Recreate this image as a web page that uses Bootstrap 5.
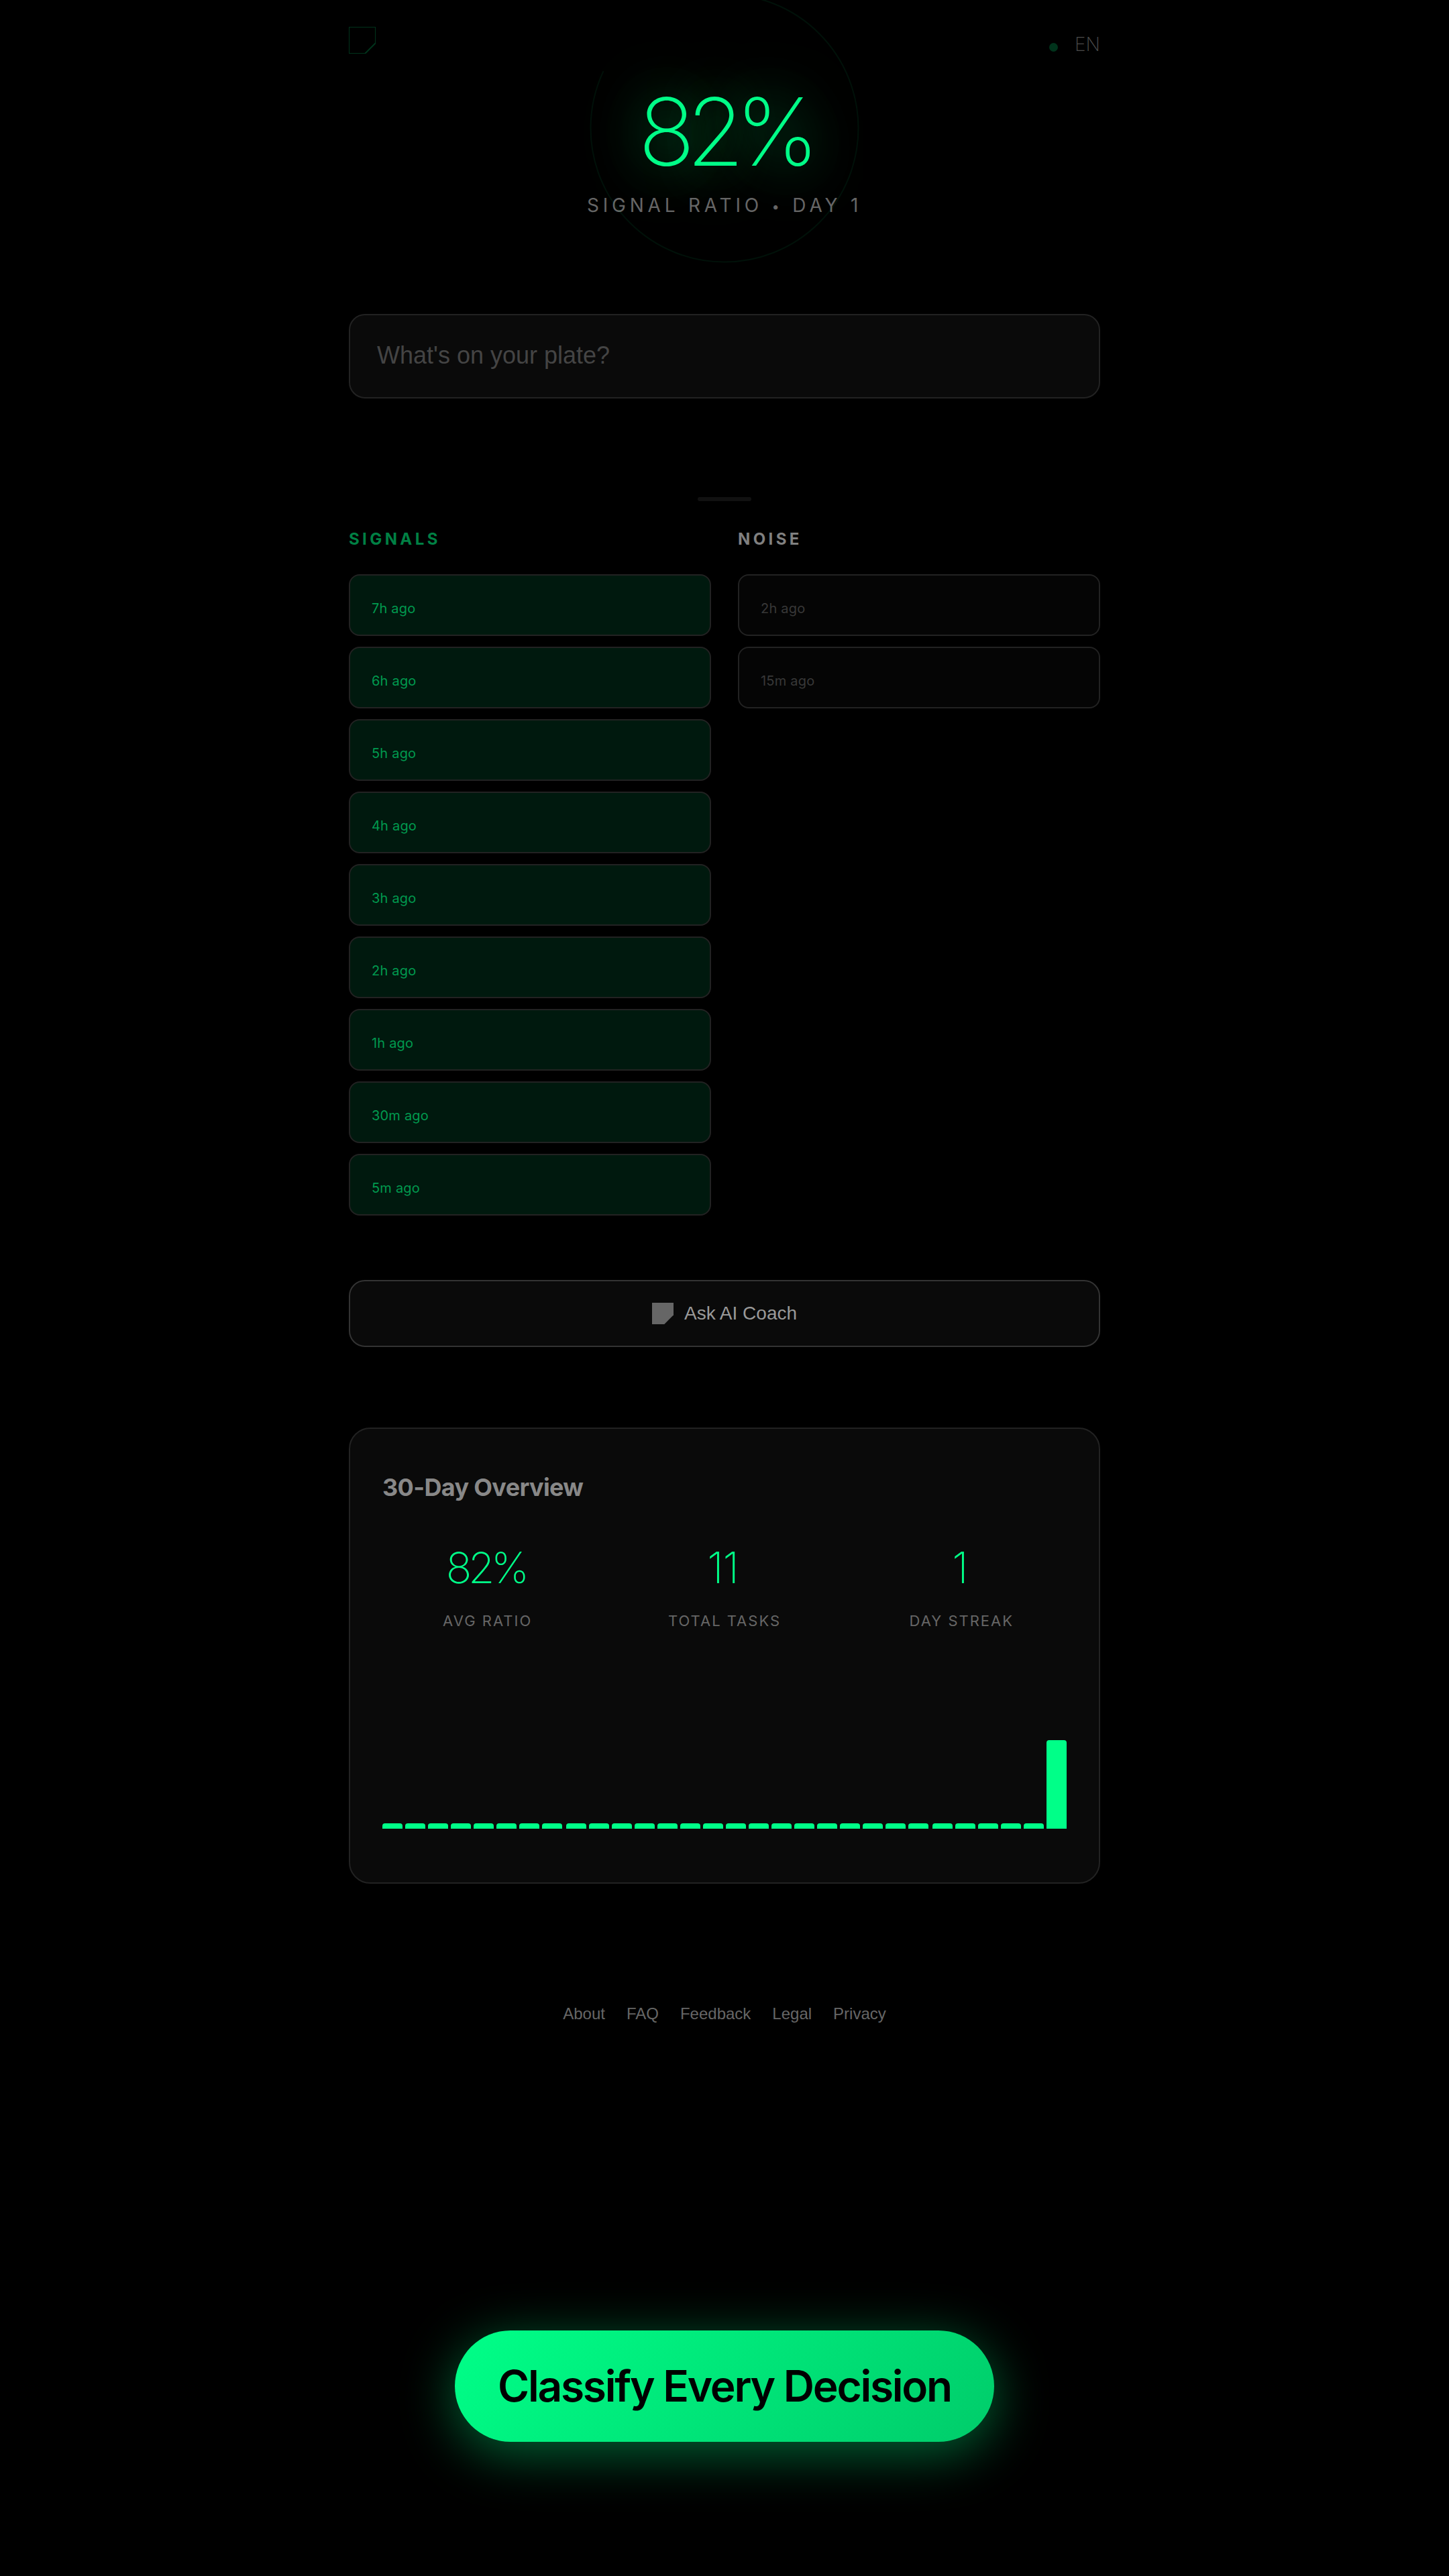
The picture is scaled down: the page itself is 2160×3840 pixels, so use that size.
<!DOCTYPE html>
<html lang="en">
<head>
<meta charset="utf-8">
<meta name="viewport" content="width=device-width, initial-scale=1">
<title>Signal / Noise</title>
<link href="https://cdn.jsdelivr.net/npm/bootstrap@5.3.0/dist/css/bootstrap.min.css" rel="stylesheet">
<style>
  :root { --signal: #00ff88; }
  body { background: #000; color: #fff; font-family: Inter, sans-serif; min-height: 3840px; }
  .shell { width: 1120px; }
  .brandbar { height: 134px; padding-top: 40px; }
  .brandmark { width: 40px; height: 40px; opacity: .2; }
  .lang-tools { height: 52px; gap: 25px; }
  .live-dot { width: 13px; height: 13px; border-radius: 50%; background: #00331b; margin-top: 8px; }
  .lang-code { font-size: 28px; font-weight: 200; line-height: 52px; letter-spacing: 0; color: #4c4c4c; }
  .hero { height: 334px; }
  .ring { position: absolute; left: 50%; top: -145px; width: 404px; height: 404px; margin-left: -202px; }
  .hero-ratio { font-size: 140px; font-weight: 230; line-height: 124px; letter-spacing: -13px; color: var(--signal); text-shadow: 0 0 80px rgba(0,255,136,.6), 0 0 120px rgba(0,255,136,.25); }
  .hero-label { font-size: 28px; line-height: 34px; letter-spacing: 5.8px; color: #666; margin-top: 31px; }
  .hero-label span { display: inline-block; font-size: 20px; line-height: 1; vertical-align: 1px; }
  .task-input, .task-input:focus { height: 126px; padding: 0 40px 2px; border: 2px solid #222; border-radius: 24px; background: #0a0a0a; color: #fff; font: 36px "Liberation Sans", sans-serif; }
  .task-input::placeholder { color: #444; opacity: 1; }
  .grip { width: 80px; height: 6px; border-radius: 4px; background: #111; margin-top: 147px; }
  .lists { margin-top: 42px; gap: 40px; }
  .list-title { font-size: 24px; font-weight: 700; line-height: 30px; letter-spacing: 4.4px; margin: 0 0 37px; }
  .list-signal .list-title { color: #008044; }
  .list-noise .list-title { color: #808080; }
  .entry { height: 92px; padding: 9px 32px 0; border: 2px solid #222; border-radius: 16px; font-size: 20px; letter-spacing: .2px; display: flex; align-items: center; }
  .list-signal .entry { background: #00190e; color: #00994f; }
  .list-noise .entry { background: #050505; color: #383838; }
  .coach, .coach:hover { height: 100px; margin-top: 96px; border: 2px solid #333; border-radius: 24px; background: #0a0a0a; color: #999; font: 28px "Liberation Sans", sans-serif; }
  .overview { height: 680px; margin-top: 120px; padding: 0 48px; border: 2px solid #222; border-radius: 32px; background: #0a0a0a; color: #888; }
  .overview-title { font-size: 36px; font-weight: 700; line-height: 44px; letter-spacing: -.65px; margin: 65px 0 60px; }
  .stats { gap: 40px; }
  .stat-value { font-size: 64px; font-weight: 230; line-height: 76px; letter-spacing: -1.2px; padding-right: 5px; color: var(--signal); }
  .stat-value.tight { letter-spacing: -5.4px; padding-right: 5px; }
  .stat-name { font-size: 22px; line-height: 28px; letter-spacing: 2px; color: #666; margin-top: 27px; }
  .chart { height: 160px; gap: 4px; margin-top: 136px; }
  .chart-bar { width: 30px; flex: none; border-radius: 4px 4px 0 0; background: var(--signal); }
  .chart-bar.wide-gap { margin-left: 2px; }
  .foot { margin-top: 179px; gap: 32px; font: 24px/30px "Liberation Sans", sans-serif; }
  .foot a { color: #666; text-decoration: none; }
  .cta, .cta:hover { position: absolute; left: 50%; top: 3474px; transform: translateX(-50%); width: 804px; height: 166px; padding: 0; border: 0; border-radius: 83px; background: linear-gradient(135deg, #00ff88, #00cc6a); box-shadow: 0 16px 80px rgba(0,255,136,.4); color: #000; font-size: 64px; font-weight: 600; letter-spacing: -2.25px; white-space: nowrap; }
</style>
</head>
<body class="position-relative overflow-x-hidden">
<div class="shell mx-auto">
  <header class="brandbar d-flex justify-content-between align-items-start">
    <svg class="brandmark" viewBox="0 0 40 40"><path d="M0 0H40V24L24 40H0Z" fill="none" stroke="#00ff88" stroke-width="2"/></svg>
    <div class="lang-tools d-flex align-items-center">
      <span class="live-dot"></span>
      <span class="lang-code">EN</span>
    </div>
  </header>

  <section class="hero position-relative text-center">
    <div class="hero-ratio">82%</div>
    <div class="hero-label">SIGNAL RATIO <span>•</span> DAY 1</div>
    <svg class="ring" viewBox="0 0 404 404"><circle cx="202" cy="202" r="199.5" fill="none" stroke="#00ff88" stroke-opacity=".065" stroke-width="2" pathLength="100" stroke-dasharray="82 18" transform="rotate(-90 202 202)"/></svg>
  </section>

  <input class="task-input form-control" type="text" placeholder="What's on your plate?">

  <div class="grip mx-auto"></div>

  <main class="lists d-flex">
    <section class="list-signal flex-fill w-50">
      <h2 class="list-title">SIGNALS</h2>
      <div class="d-flex flex-column gap-3">
        <div class="entry">7h ago</div>
        <div class="entry">6h ago</div>
        <div class="entry">5h ago</div>
        <div class="entry">4h ago</div>
        <div class="entry">3h ago</div>
        <div class="entry">2h ago</div>
        <div class="entry">1h ago</div>
        <div class="entry">30m ago</div>
        <div class="entry">5m ago</div>
      </div>
    </section>
    <section class="list-noise flex-fill w-50">
      <h2 class="list-title">NOISE</h2>
      <div class="d-flex flex-column gap-3">
        <div class="entry">2h ago</div>
        <div class="entry">15m ago</div>
      </div>
    </section>
  </main>

  <button class="coach btn w-100 d-flex align-items-center justify-content-center gap-3" type="button">
    <svg width="32" height="32" viewBox="0 0 32 32"><path d="M0 0H32V18.3L18.3 32H0Z" fill="#666"/></svg>
    <span>Ask AI Coach</span>
  </button>

  <section class="overview d-flex flex-column">
    <h3 class="overview-title">30-Day Overview</h3>
    <div class="stats d-flex text-center">
      <div class="flex-fill w-100"><div class="stat-value tight">82%</div><div class="stat-name">AVG RATIO</div></div>
      <div class="flex-fill w-100"><div class="stat-value">11</div><div class="stat-name">TOTAL TASKS</div></div>
      <div class="flex-fill w-100"><div class="stat-value">1</div><div class="stat-name">DAY STREAK</div></div>
    </div>
    <div class="chart d-flex align-items-end" id="chart"></div>
  </section>

  <footer class="foot d-flex justify-content-center">
    <a href="#">About</a><a href="#">FAQ</a><a href="#">Feedback</a><a href="#">Legal</a><a href="#">Privacy</a>
  </footer>
</div>
<button class="cta btn" type="button">Classify Every Decision</button>

<script src="https://cdn.jsdelivr.net/npm/bootstrap@5.3.0/dist/js/bootstrap.bundle.min.js"></script>
<script>
  // One bar per day; days without entries keep the minimum height.
  const chart = document.getElementById('chart');
  const days = Array(29).fill(0).concat(82);
  days.forEach((ratio, i) => {
    const bar = document.createElement('div');
    bar.className = 'chart-bar' + (i === 8 || i === 24 ? ' wide-gap' : '');
    bar.style.height = Math.max(8, Math.round(ratio * 1.61)) + 'px';
    chart.appendChild(bar);
  });
</script>
</body>
</html>
